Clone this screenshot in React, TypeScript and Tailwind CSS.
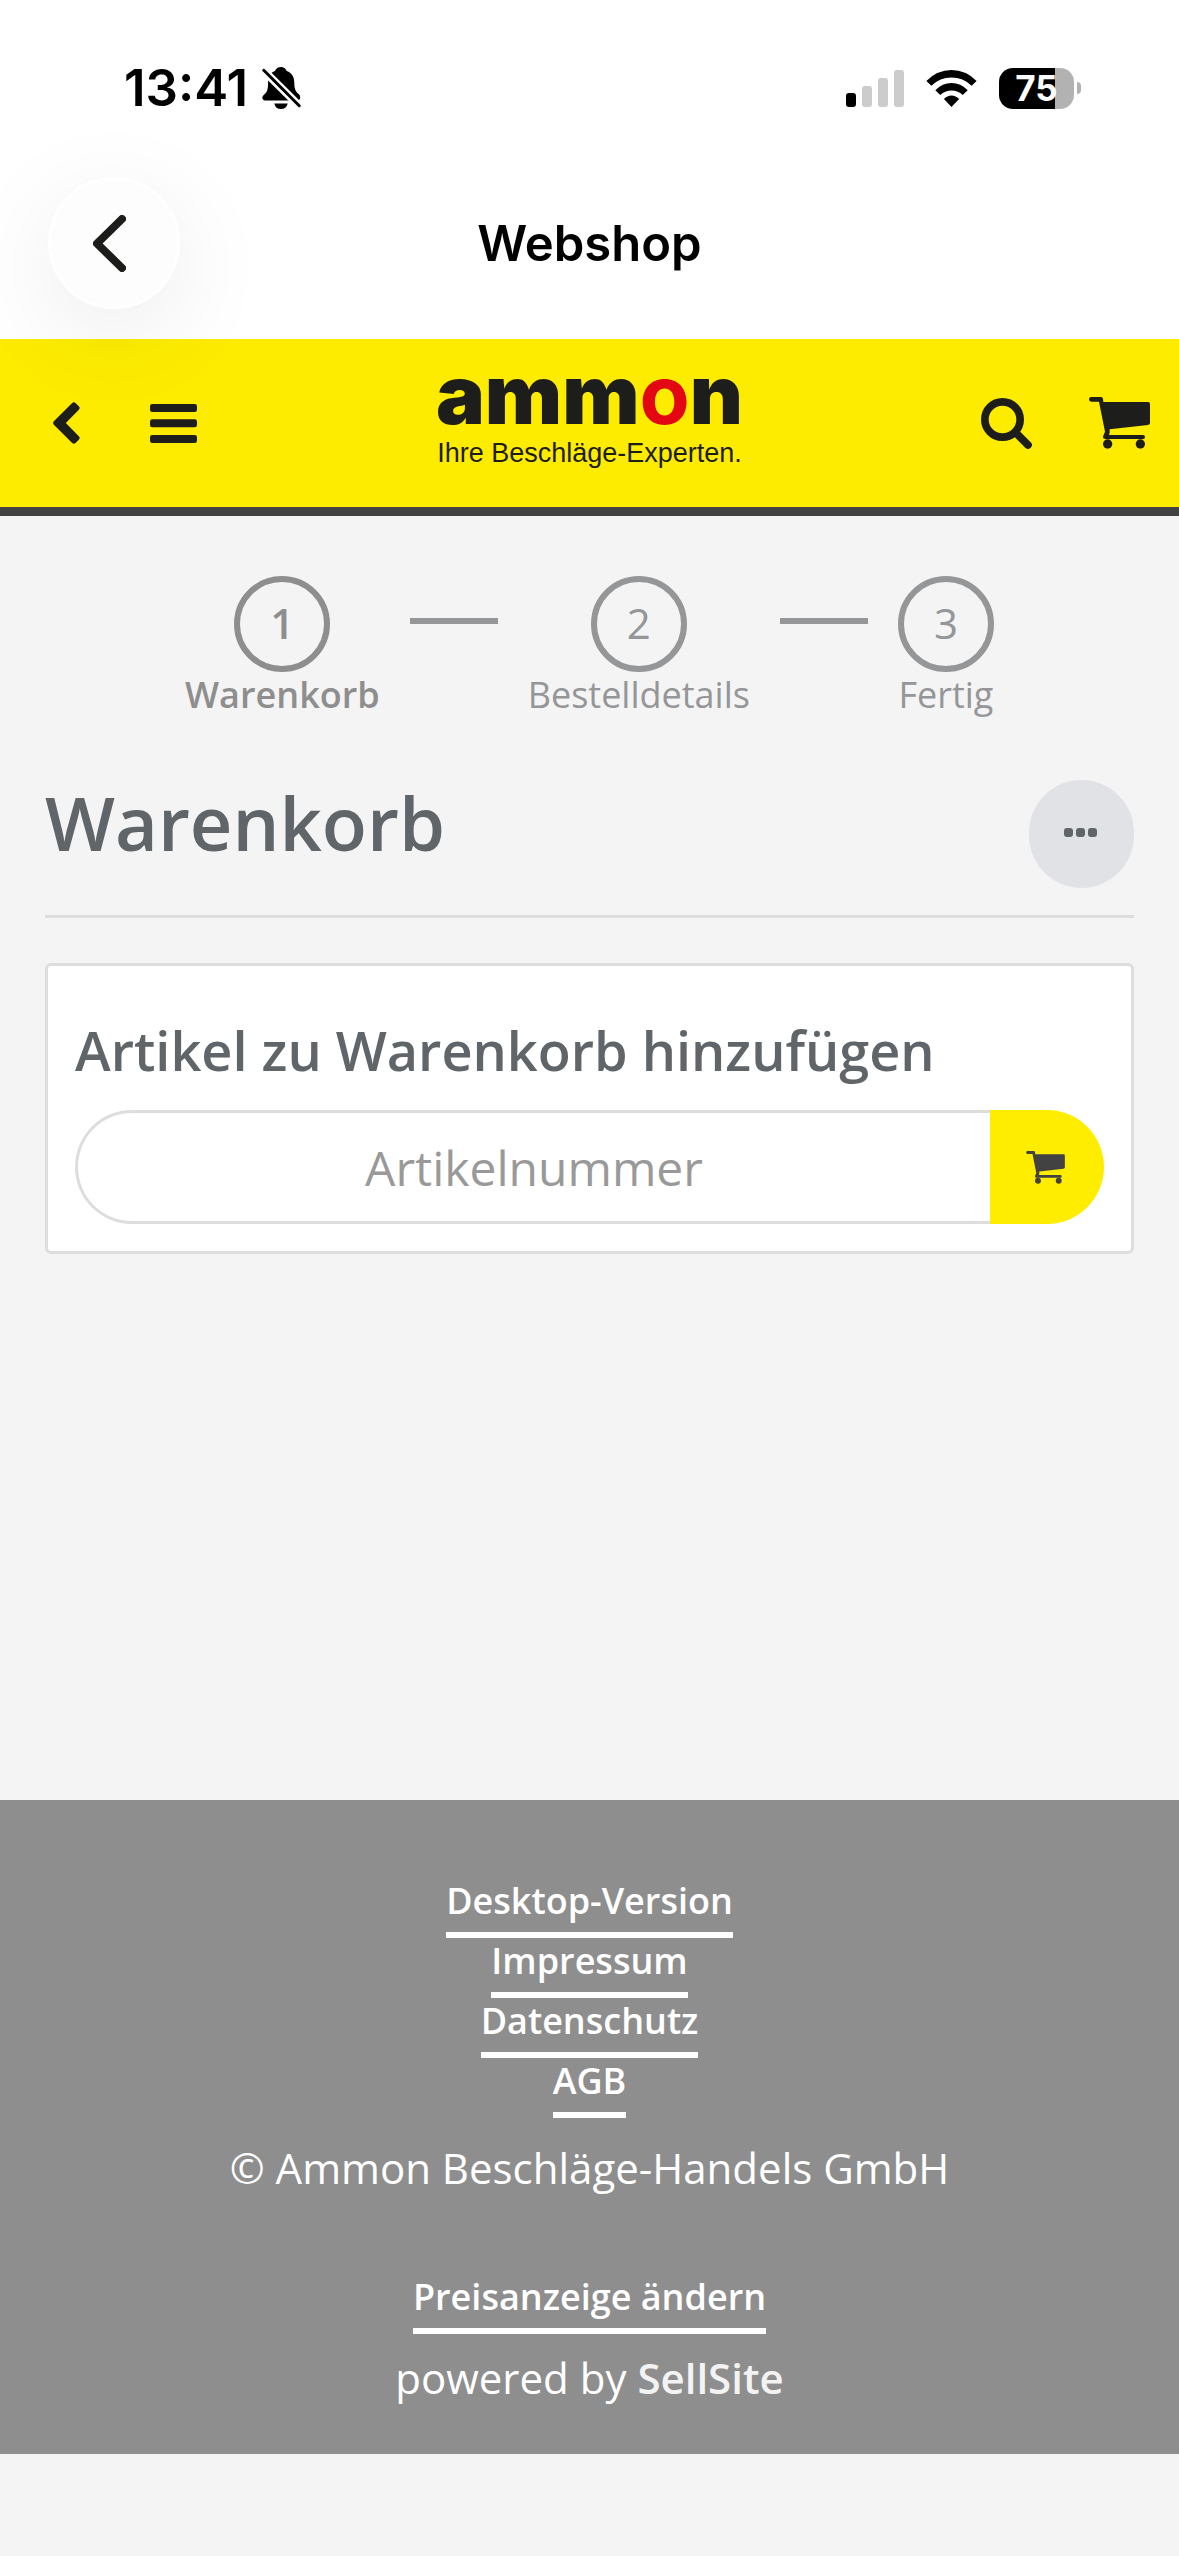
import { useState } from 'react';

const steps = [
  { number: 1, label: 'Warenkorb', active: true },
  { number: 2, label: 'Bestelldetails', active: false },
  { number: 3, label: 'Fertig', active: false },
];

const footerLinks = ['Desktop-Version', 'Impressum', 'Datenschutz', 'AGB'];

function CartIcon({ className }: { className?: string }) {
  return (
    <svg viewBox="0 0 183 156" fill="currentColor" aria-hidden="true" className={className}>
      <path d="M7 0H36Q41 0 42 5L43 15H177Q183 15 183 21V77Q183 83 177 84L62 97V106Q62 110 60 114H162Q168 114 168 120T162 126H49Q42 126 42 120Q42 117 44 114L48 104L30 14H7Q0 14 0 7T7 0Z" />
      <circle cx="56" cy="141" r="14" />
      <circle cx="154" cy="141" r="14" />
    </svg>
  );
}

function SilentBellIcon() {
  return (
    <svg viewBox="0 0 118 128" className="h-[42px] w-[39px]" aria-hidden="true">
      <path
        d="M57 0C66 0 71 5 75 12C92 18 98 32 98 48C98 68 103 76 113 84C118 90 117 102 108 102H9C0 102 -2 92 4 86C14 78 18 70 18 50C18 28 24 18 39 12C43 5 48 0 57 0ZM37 111H78C75 122 68 128 57 128S40 122 37 111Z"
        fill="#000"
      />
      <path d="M4 10L113 118" stroke="#fff" strokeWidth="24" />
      <path d="M5 10L113 118" stroke="#000" strokeWidth="9" strokeLinecap="round" />
    </svg>
  );
}

function StatusBar() {
  return (
    <div className="flex h-[177px] items-start justify-between bg-white pt-[60px] pr-[98px] pl-[124px] font-['Inter',sans-serif] text-black">
      <div className="flex h-14 items-center gap-3.5">
        <span className="text-[51px] font-semibold">13:41</span>
        <SilentBellIcon />
      </div>
      <div className="flex h-14 items-center">
        <svg viewBox="0 0 58 37" className="mr-[22px] h-[37px] w-[58px]" aria-hidden="true">
          <rect x="0" y="23" width="10" height="14" rx="3" fill="#000" />
          <rect x="16" y="16" width="10" height="21" rx="3" fill="#ccc" />
          <rect x="32" y="8" width="10" height="29" rx="3" fill="#ccc" />
          <rect x="48" y="0" width="10" height="37" rx="3" fill="#ccc" />
        </svg>
        <svg viewBox="0 0 152 112" className="mr-[22px] h-[37px] w-[51px]" aria-hidden="true">
          <path d="M0 33Q33 0 76 0T152 33L137 48Q111 23 76 23T15 48Z" />
          <path d="M27 61Q48 39 76 39T125 61L110 76Q96 62 76 62T42 76Z" />
          <path d="M53 88Q63 77 76 77T99 88L76 112Z" />
        </svg>
        <div className="flex h-[41px] w-[75px] items-center justify-center overflow-hidden rounded-[14px] bg-linear-to-r from-black from-75% to-[#b2b2b2] to-75%">
          <span className="text-[35px] font-bold text-white">75</span>
        </div>
        <div className="ml-[3px] h-3 w-1 rounded-r-full bg-[#b2b2b2]" />
      </div>
    </div>
  );
}

function TitleBar() {
  return (
    <div className="relative z-10 grid grid-cols-[1fr_auto_1fr] items-center px-12 pb-[30px] font-['Inter',sans-serif]">
      <button
        type="button"
        aria-label="Zurück"
        className="flex size-[132px] items-center justify-center rounded-full border-[3px] border-white bg-[#fdfdfd] pr-2.5 shadow-[0_24px_100px_rgba(0,0,0,0.08)]"
      >
        <svg viewBox="0 0 33 57" fill="none" stroke="#1c1c1a" strokeWidth="8" strokeLinecap="round" strokeLinejoin="round" className="h-[57px] w-[33px]">
          <path d="M29 4L4 28.500L29 53" />
        </svg>
      </button>
      <h1 className="pt-0.5 text-[49px] leading-[60px] font-semibold text-black">Webshop</h1>
    </div>
  );
}

function ShopHeader() {
  return (
    <header className="grid grid-cols-[1fr_auto_1fr] items-center border-b-9 border-[#424242] bg-[#fdec00] text-[#1d1d1b]">
      <div className="flex items-center gap-[70px] pl-[53px]">
        <button type="button" aria-label="Zurück">
          <svg viewBox="0 0 80 126" fill="currentColor" className="h-[42px] w-[27px]">
            <path d="M2 58L57 3Q62 -2 67 3L77 13Q82 18 77 23L38 63L77 103Q82 108 77 113L67 123Q62 128 57 123L2 68Q-2 63 2 58Z" />
          </svg>
        </button>
        <button type="button" aria-label="Menü">
          <svg viewBox="0 0 141 117" fill="currentColor" className="h-[39px] w-[47px]">
            <rect width="141" height="24" rx="7" />
            <rect y="46" width="141" height="24" rx="7" />
            <rect y="93" width="141" height="24" rx="7" />
          </svg>
        </button>
      </div>
      <a href="#start" className="flex h-[168px] flex-col items-center pt-[22px]">
        <span className="font-['Inter',sans-serif] text-[82px] leading-[68px] font-black">
          amm<span className="font-bold text-[#e30613]">o</span>n
        </span>
        <span className="mt-2 font-['Liberation_Sans',sans-serif] text-[27px] leading-8">Ihre Beschläge-Experten.</span>
      </a>
      <div className="flex items-center justify-end gap-[57px] pr-[29px]">
        <button type="button" aria-label="Suche">
          <svg viewBox="0 0 153 153" fill="none" stroke="currentColor" className="size-[51px]">
            <circle cx="64.500" cy="64.500" r="53" strokeWidth="23" />
            <path d="M106 106L141 141" strokeWidth="23" strokeLinecap="round" />
          </svg>
        </button>
        <button type="button" aria-label="Warenkorb">
          <CartIcon className="h-[52px] w-[61px]" />
        </button>
      </div>
    </header>
  );
}

function CheckoutSteps() {
  return (
    <ol className="flex justify-center gap-[30px] text-[#949698]">
      {steps.map((step, i) => (
        <li key={step.number} className="flex gap-[30px]">
          {i > 0 && <span className="mt-[42px] h-1.5 w-[88px] bg-[#949698]" />}
          <div className={step.active ? 'flex flex-col items-center font-semibold text-[#8e8e8e]' : 'flex flex-col items-center'}>
            <span className="flex size-24 items-center justify-center rounded-full border-6 border-current pb-1 text-[42px]">
              {step.number}
            </span>
            <span className="text-4xl leading-[46px]">{step.label}</span>
          </div>
        </li>
      ))}
    </ol>
  );
}

function AddArticle() {
  const [article, setArticle] = useState('');

  return (
    <form
      onSubmit={e => e.preventDefault()}
      className="mt-[45px] rounded-md border-3 border-[#ddd] bg-white px-[27px] pt-[54px] pb-[27px]"
    >
      <label htmlFor="article" className="block text-[54px] leading-[60px] font-semibold">
        Artikel zu Warenkorb hinzufügen
      </label>
      <div className="mt-[30px] flex h-[114px]">
        <input
          id="article"
          type="text"
          placeholder="Artikelnummer"
          value={article}
          onChange={e => setArticle(e.target.value)}
          className="min-w-0 flex-1 rounded-l-full border-3 border-r-0 border-[#ddd] text-center text-5xl outline-none placeholder:text-[#999]"
        />
        <button
          type="submit"
          aria-label="In den Warenkorb"
          className="flex w-[114px] items-center justify-center rounded-r-full bg-[#ffed00] pr-[3px] text-[#424242]"
        >
          <CartIcon className="h-[33px] w-[39px]" />
        </button>
      </div>
    </form>
  );
}

function Footer() {
  return (
    <footer className="mb-[102px] flex flex-col items-center bg-[#8e8e8e] pt-[78px] pb-[46px] text-[42px] leading-[60px] text-white">
      {footerLinks.map(link => (
        <a key={link} href="#footer" className="border-b-6 border-white pb-2 text-4xl leading-[46px] font-semibold">
          {link}
        </a>
      ))}
      <p className="mt-5">© Ammon Beschläge-Handels GmbH</p>
      <a href="#preise" className="mt-[76px] border-b-6 border-white pb-2 text-4xl leading-[46px] font-semibold">
        Preisanzeige ändern
      </a>
      <p className="mt-3.5">
        powered by{' '}
        <a href="#sellsite" className="font-semibold text-[#f3f3f3]">
          SellSite
        </a>
      </p>
    </footer>
  );
}

export default function App() {
  return (
    <div className="flex min-h-screen flex-col bg-[#f4f4f4] font-['Open_Sans',sans-serif] text-[#5f6569]">
      <div className="bg-white">
        <StatusBar />
        <TitleBar />
      </div>
      <ShopHeader />
      <main className="flex-1 px-[45px] pt-[60px] pb-12">
        <CheckoutSteps />
        <div className="mt-[62px] flex items-start justify-between border-b-3 border-[#ddd] pb-[27px]">
          <h2 className="text-[74px] leading-[86px] font-semibold">Warenkorb</h2>
          <button
            type="button"
            aria-label="Weitere Optionen"
            className="flex h-[108px] w-[105px] items-center justify-center gap-[3px] rounded-full bg-[#e1e2e6] pr-[3px] pb-[3px]"
          >
            <span className="size-[9px] rounded-[3px] bg-[#5f6569]" />
            <span className="size-[9px] rounded-[3px] bg-[#5f6569]" />
            <span className="size-[9px] rounded-[3px] bg-[#5f6569]" />
          </button>
        </div>
        <AddArticle />
      </main>
      <Footer />
    </div>
  );
}
